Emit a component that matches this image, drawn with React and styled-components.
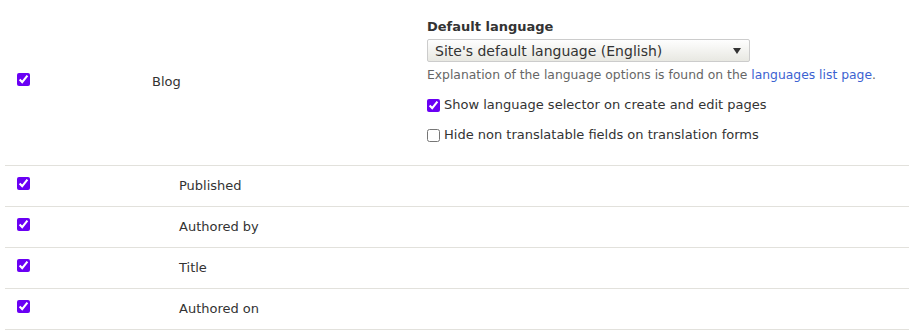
import React from "react";
import styled, { createGlobalStyle } from "styled-components";

const GlobalStyle = createGlobalStyle`
  body {
    margin: 0;
    background: #fff;
    font-family: "DejaVu Sans", sans-serif;
    font-size: 13px;
    color: #333;
  }
`;

const fields = ["Published", "Authored by", "Title", "Authored on"];

function App() {
  return (
    <>
      <GlobalStyle />
      <Table>
        <Row>
          <CheckCell>
            <Check type="checkbox" defaultChecked />
          </CheckCell>
          <NameCell>Blog</NameCell>
          <SettingsCell>
            <FieldLabel>Default language</FieldLabel>
            <SelectWrap>
              <Select defaultValue="site">
                <option value="site">Site's default language (English)</option>
              </Select>
              <Arrow />
            </SelectWrap>
            <Description>
              Explanation of the language options is found on the{" "}
              <a href="#">languages list page</a>.
            </Description>
            <Option>
              <OptionCheck type="checkbox" defaultChecked />
              Show language selector on create and edit pages
            </Option>
            <Option>
              <OptionCheck type="checkbox" />
              Hide non translatable fields on translation forms
            </Option>
          </SettingsCell>
        </Row>
        {fields.map((f) => (
          <Row key={f} small>
            <CheckCell>
              <Check type="checkbox" defaultChecked />
            </CheckCell>
            <NameCell indent>{f}</NameCell>
            <SettingsCell />
          </Row>
        ))}
      </Table>
    </>
  );
}

export default App;

const Table = styled.div`
  margin-left: 5px;
  width: 920px;
`;

const Row = styled.div`
  display: grid;
  grid-template-columns: 147px 275px 1fr;
  align-items: center;
  height: ${(p) => (p.small ? "40px" : "165px")};
  border-bottom: 1px solid #e2e1dc;
`;

const CheckCell = styled.div`
  padding-left: 12px;
  display: flex;
  align-items: center;
`;

const Check = styled.input`
  width: 13px;
  height: 13px;
  margin: 0 0 6px 0;
  accent-color: #6a00f4;
`;

const NameCell = styled.div`
  padding-left: ${(p) => (p.indent ? "27px" : "0")};
  padding-bottom: 2px;
`;

const SettingsCell = styled.div`
  align-self: start;
  padding-top: 18px;
`;

const FieldLabel = styled.div`
  font-weight: bold;
  line-height: 18px;
  margin-bottom: 3px;
`;

const SelectWrap = styled.div`
  position: relative;
  width: 323px;
`;

const Select = styled.select`
  appearance: none;
  width: 323px;
  height: 23px;
  padding: 0 24px 0 7px;
  border: 1px solid #ccc;
  border-radius: 2px;
  background: linear-gradient(#fefefe, #e8e8e2);
  font-family: "DejaVu Sans", sans-serif;
  font-size: 14px;
  color: #333;
  outline: none;
`;

const Arrow = styled.span`
  position: absolute;
  right: 9px;
  top: 9px;
  width: 0;
  height: 0;
  border-left: 4px solid transparent;
  border-right: 4px solid transparent;
  border-top: 6px solid #333;
  pointer-events: none;
`;

const Description = styled.div`
  font-size: 12.35px;
  color: #666;
  line-height: 18px;
  margin-top: 4px;

  a {
    color: #3c62d1;
    text-decoration: none;
  }
`;

const Option = styled.label`
  display: flex;
  align-items: center;
  line-height: 18px;
  margin-top: 12px;
`;

const OptionCheck = styled.input`
  width: 13px;
  height: 13px;
  margin: 0 4px 0 0;
  accent-color: #6a00f4;
`;
